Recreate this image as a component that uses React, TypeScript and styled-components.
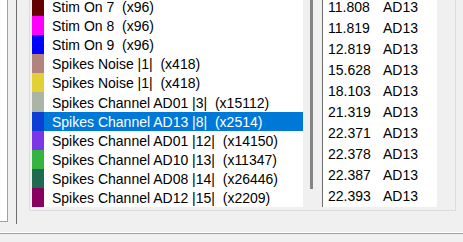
import React from "react";
import styled, { createGlobalStyle } from "styled-components";

interface IEvent {
  label: string;
  color: string;
}

const events: IEvent[] = [
  { label: "Stim On 7  (x96)", color: "#660000" },
  { label: "Stim On 8  (x96)", color: "#ff00ff" },
  { label: "Stim On 9  (x96)", color: "#0000ff" },
  { label: "Spikes Noise |1|  (x418)", color: "#b4827e" },
  { label: "Spikes Noise |1|  (x418)", color: "#e2d035" },
  { label: "Spikes Channel AD01 |3|  (x15112)", color: "#aab5a5" },
  { label: "Spikes Channel AD13 |8|  (x2514)", color: "#0d3fd6" },
  { label: "Spikes Channel AD01 |12|  (x14150)", color: "#7b37e6" },
  { label: "Spikes Channel AD10 |13|  (x11347)", color: "#33b53f" },
  { label: "Spikes Channel AD08 |14|  (x26446)", color: "#1e6b50" },
  { label: "Spikes Channel AD12 |15|  (x2209)", color: "#8a0060" },
];

const selectedIndex = 6;

const times = [
  "11.808",
  "11.819",
  "12.819",
  "15.628",
  "18.103",
  "21.319",
  "22.371",
  "22.378",
  "22.387",
  "22.393",
];

const GlobalStyle = createGlobalStyle`
  html, body {
    margin: 0;
    padding: 0;
    background: #f0f0f0;
  }
`;

const App: React.FC = () => {
  return (
    <Window>
      <GlobalStyle />
      <MainRow>
        <SidePane />
        <ContentPanel>
          <GroupBox>
            <EventList>
              <ListBody>
                <Rows $offset={-3}>
                  {events.map((ev, i) => (
                    <EventRow key={i}>
                      <Swatch color={ev.color} />
                      <EventLabel selected={i === selectedIndex}>
                        {ev.label}
                      </EventLabel>
                    </EventRow>
                  ))}
                </Rows>
              </ListBody>
              <ScrollBar>
                <Thumb />
              </ScrollBar>
            </EventList>
            <TimeList>
              <Rows $offset={-3.5}>
                {times.map((t) => (
                  <TimeRow key={t}>
                    <TimeCell>{t}</TimeCell>
                    <span>AD13</span>
                  </TimeRow>
                ))}
              </Rows>
            </TimeList>
          </GroupBox>
        </ContentPanel>
      </MainRow>
      <LightRule />
      <StatusBar />
    </Window>
  );
};

const Window = styled.div`
  width: 463px;
  height: 242px;
  overflow: hidden;
  display: flex;
  flex-direction: column;
  background: #f0f0f0;
  font-family: "Liberation Sans", Arial, sans-serif;
  font-size: 14px;
  color: #000;
`;

const MainRow = styled.div`
  display: flex;
  align-items: flex-start;
  gap: 8px;
  height: 222px;
`;

const SidePane = styled.div`
  width: 7px;
  height: 221px;
  background: #fff;
  border-right: 1px solid #a0a0a0;
  border-bottom: 1px solid #a0a0a0;
`;

const ContentPanel = styled.div`
  flex: 1;
  height: 224px;
  border-left: 1px solid #707070;
  padding: 0 7px 0 12px;
`;

const GroupBox = styled.div`
  display: flex;
  height: 209px;
  border: 1px solid #dcdcdc;
  border-top: none;
  padding: 0 18px 1px 2px;
`;

const EventList = styled.div`
  display: flex;
  width: 290px;
  height: 207px;
`;

const ListBody = styled.div`
  width: 271px;
  overflow: hidden;
  background: #fff;
`;

const Rows = styled.div<{ $offset: number }>`
  margin-top: ${(p) => p.$offset}px;
`;

const EventRow = styled.div`
  display: flex;
  height: 19.1px;
`;

const Swatch = styled.div<{ color: string }>`
  width: 12px;
  flex-shrink: 0;
  background: ${(p) => p.color};
`;

const EventLabel = styled.div<{ selected?: boolean }>`
  flex: 1;
  display: flex;
  align-items: center;
  padding: 1px 0 0 8px;
  white-space: pre;
  background: ${(p) => (p.selected ? "#0078d7" : "transparent")};
  color: ${(p) => (p.selected ? "#fff" : "#000")};
`;

const ScrollBar = styled.div`
  width: 19px;
  background: #f0f0f0;
`;

const Thumb = styled.div`
  width: 3px;
  height: 189px;
  margin-left: 7px;
  background: #858585;
`;

const TimeList = styled.div`
  width: 114px;
  height: 207px;
  overflow: hidden;
  background: #fff;
  border-left: 1px solid #6e6e6e;
`;

const TimeRow = styled.div`
  display: flex;
  align-items: center;
  height: 21px;
  padding-left: 5px;
`;

const TimeCell = styled.span`
  width: 55px;
`;

const LightRule = styled.div`
  height: 10px;
  border-bottom: 1px solid #ffffff;
`;

const StatusBar = styled.div`
  flex: 1;
  border-top: 1px solid #a0a0a0;
`;

export default App;
